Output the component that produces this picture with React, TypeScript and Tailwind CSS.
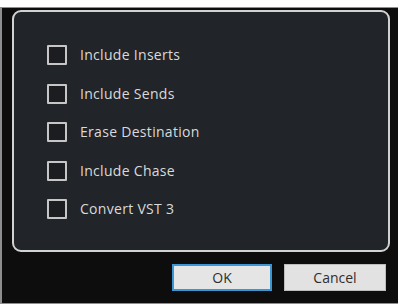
const options = ['Include Inserts', 'Include Sends', 'Erase Destination', 'Include Chase', 'Convert VST 3'];

const App = () => {
  return (
    <div className="w-[398px] h-[306px] bg-white pt-[7px] font-['Open_Sans',sans-serif]">
      <div className="h-[297px] bg-[#0d0d0e] border-t border-b border-l-2 border-[#8e8e8e] pl-[10px] pt-[2px]">
        <div className="w-[378px] h-[242px] rounded-[9px] border-2 border-[#d2d2d2] bg-[#212429] pl-[33px] pt-[33px]">
          <div className="flex flex-col gap-[18.5px]">
            {options.map(label => (
              <div key={label} className="flex items-center h-[20px]">
                <span className="w-[20px] h-[20px] border-2 border-[#c6c6c6] bg-[#1b1d20] rounded-[1px] shrink-0" />
                <span className="ml-[13px] text-[14px] font-medium tracking-[0.3px] text-[#dadada] leading-none">{label}</span>
              </div>
            ))}
          </div>
        </div>
        <div className="flex justify-end gap-[12px] pr-[12px] mt-[12px]">
          <button className="w-[100px] h-[27px] bg-[#e5e5e5] border-2 border-[#3b97d3] text-[14px] text-[#2e2e2e]">OK</button>
          <button className="w-[102px] h-[27px] bg-[#e2e2e2] border border-[#bdbdbd] text-[14px] text-[#2e2e2e]">Cancel</button>
        </div>
      </div>
    </div>
  );
};

export default App;
